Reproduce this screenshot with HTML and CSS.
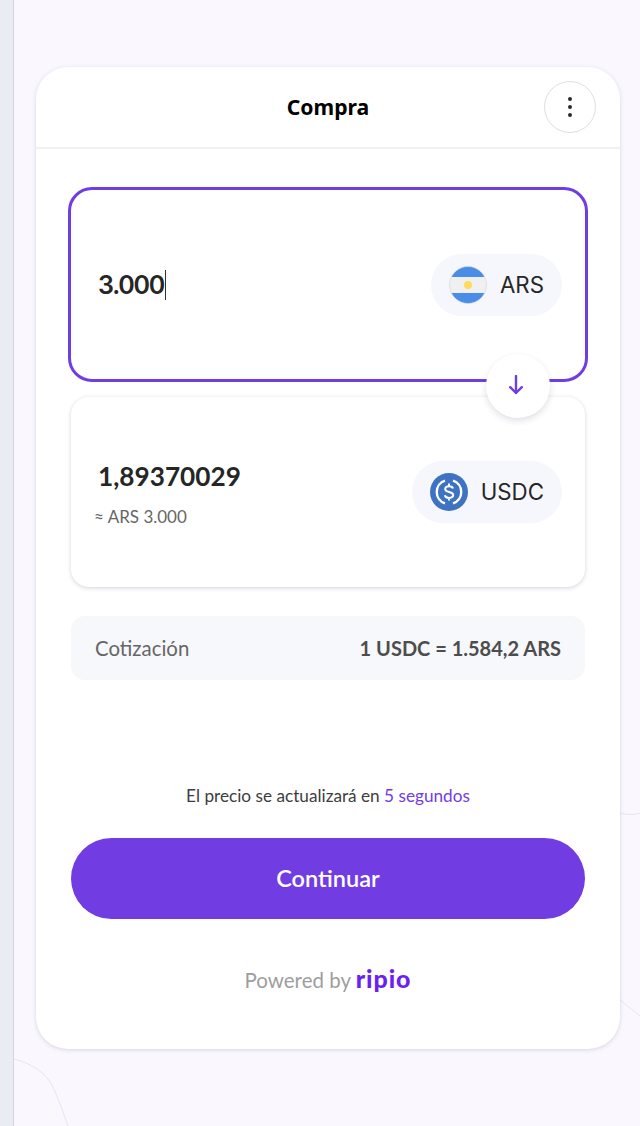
FILE: index.html
```html
<!DOCTYPE html>
<html lang="es">
<head>
<meta charset="utf-8">
<title>Compra</title>
<link rel="stylesheet" href="styles.css">
</head>
<body>
<div class="page">
  <aside class="rail"></aside>
  <main class="stage">
    <svg class="curves" width="626" height="1126" viewBox="0 0 626 1126" fill="none">
      <path d="M0 1059C16 1063 32 1072 39 1087C45 1100 50 1115 54 1126" class="curve"/>
      <path d="M606 1000L626 1016" class="curve"/>
      <path d="M606 813C613 815 619 815 626 813" class="curve"/>
    </svg>
    <section class="card">
      <header class="head">
        <h1 class="title">Compra</h1>
        <button class="more" type="button" aria-label="Más opciones">
          <svg width="4" height="20" viewBox="0 0 4 20"><circle cx="2" cy="2" r="2"/><circle cx="2" cy="10" r="2"/><circle cx="2" cy="18" r="2"/></svg>
        </button>
      </header>
      <div class="body">
        <div class="swap">
          <div class="from">
            <div class="amount-in">3.000<span class="caret"></span></div>
            <div class="pill">
              <svg class="coin" width="38" height="38" viewBox="0 0 38 38">
                <defs><clipPath id="flag"><circle cx="19" cy="19" r="18.5"/></clipPath></defs>
                <g clip-path="url(#flag)">
                  <rect width="38" height="38" fill="#f0f0f0"/>
                  <rect width="38" height="11" fill="#4a8de8"/>
                  <rect y="27" width="38" height="11" fill="#4a8de8"/>
                  <circle cx="19" cy="19" r="4" fill="#ffda5c"/>
                </g>
                <circle cx="19" cy="19" r="18.5" fill="none" stroke="#d5d8de" stroke-width=".7"/>
              </svg>
              <span class="code">ARS</span>
            </div>
          </div>
          <div class="arrow">
            <svg width="14" height="20" viewBox="0 0 14 20" fill="none"><path d="M7 1V18M1.2 12.2L7 18L12.8 12.2" stroke="#713de3" stroke-width="2.4" stroke-linecap="round" stroke-linejoin="round"/></svg>
          </div>
          <div class="to">
            <div class="values">
              <div class="amount-out">1,89370029</div>
              <div class="approx">≈ ARS 3.000</div>
            </div>
            <div class="pill">
              <svg class="coin" width="38" height="38" viewBox="0 0 38 38" fill="none">
                <circle cx="19" cy="19" r="19" fill="#3e73c4"/>
                <path d="M15 7.6A12 12 0 0 0 15 30.4M23 7.6A12 12 0 0 1 23 30.4" stroke="#fff" stroke-width="2.4"/>
                <path d="M23 15.6C22.6 13.9 21.2 13.2 19 13.2C16.6 13.2 15.2 14.3 15.2 16C15.2 20.3 23.2 17.8 23.2 22.1C23.2 23.8 21.5 24.9 19 24.9C16.6 24.9 15.2 24 14.8 22.3M19 10.5V13.2M19 24.9V27.5" stroke="#fff" stroke-width="2"/>
              </svg>
              <span class="code">USDC</span>
            </div>
          </div>
        </div>
        <div class="rate">
          <span class="rate-label">Cotización</span>
          <span class="rate-value">1 USDC = 1.584,2 ARS</span>
        </div>
        <p class="timer">El precio se actualizará en <span class="accent">5 segundos</span></p>
        <button class="cta" type="button">Continuar</button>
        <p class="powered">Powered by <span class="brand">ripio</span></p>
      </div>
    </section>
  </main>
</div>
</body>
</html>
```
FILE: styles.css
```css
* { box-sizing: border-box; }
html, body { margin: 0; height: 100%; }
body { font-family: "Lato", sans-serif; background: #faf8fe; overflow: hidden; }
.page { display: flex; height: 1126px; }
.rail { width: 14px; flex: none; background: #e9ecf3; border-right: 1px solid #d4d5da; }
.stage { position: relative; flex: 1; padding: 67px 20px 0 22px; }
.curves { position: absolute; left: 0; top: 0; }
.curve { stroke: #e8e3fa; stroke-width: 1; }
.card {
  position: relative;
  height: 982px;
  background: #fff;
  border-radius: 32px;
  box-shadow: 0 1px 4px rgba(60, 50, 110, .18);
}
.head {
  position: relative;
  height: 82px;
  display: flex;
  align-items: center;
  justify-content: center;
  border-bottom: 2px solid #f1f1f4;
}
.title { margin: 0; font: 700 21.2px/30px "Noto Sans", sans-serif; color: #000; }
.more {
  position: absolute;
  right: 24px;
  top: 14px;
  width: 52px;
  height: 52px;
  padding: 0;
  display: flex;
  align-items: center;
  justify-content: center;
  background: #fff;
  border: 1.5px solid #dedee4;
  border-radius: 50%;
}
.more circle { fill: #2b2b2b; }
.body { padding: 38px 35px 0; }
.swap { position: relative; }
.from {
  height: 195px;
  margin: 0 -3px;
  padding: 0 23px 0 27px;
  display: flex;
  align-items: center;
  justify-content: space-between;
  border: 3px solid #713de3;
  border-radius: 24px;
}
.amount-in { display: flex; align-items: center; margin-top: 1px; font: 600 25px/34px "Inter", sans-serif; letter-spacing: -1.2px; color: #262626; }
.caret { width: 1px; height: 30px; margin-left: 1px; background: #333; }
.pill {
  height: 62px;
  padding: 0 18px 0 17.5px;
  display: flex;
  align-items: center;
  gap: 13px;
  background: #f6f7fc;
  border-radius: 31px;
}
.coin { flex: none; }
.code { font: 400 22.3px/28px "Inter", sans-serif; color: #262626; }
.arrow {
  position: absolute;
  left: 415px;
  top: 167px;
  z-index: 1;
  width: 64px;
  height: 64px;
  display: flex;
  align-items: center;
  justify-content: center;
  background: #fff;
  border-radius: 50%;
  box-shadow: 0 3px 6px rgba(40, 30, 80, .14);
}
.arrow svg { margin-top: -2px; margin-left: -5px; }
.to {
  height: 190px;
  margin-top: 15px;
  padding: 0 23px 0 27px;
  display: flex;
  align-items: center;
  justify-content: space-between;
  background: #fff;
  border-radius: 18px;
  box-shadow: 0 1px 4px rgba(40, 30, 80, .2);
}
.values { padding-top: 4px; }
.amount-out { font-weight: 700; font-size: 26.2px; line-height: 34px; color: #262626; }
.approx { margin: 12px 0 0 -4px; font-size: 17px; line-height: 24px; color: #666; }
.rate {
  height: 64px;
  margin-top: 29px;
  padding: 0 24px;
  display: flex;
  align-items: center;
  justify-content: space-between;
  background: #f7f8fc;
  border-radius: 14px;
  font-size: 20.4px;
  color: #666;
}
.rate-value { font-weight: 700; font-size: 20px; color: #4d4d4d; }
.timer { margin: 104px 0 0; text-align: center; font-size: 17.2px; line-height: 24px; color: #3d3d3d; }
.accent { color: #713de3; }
.cta {
  display: block;
  width: 100%;
  height: 81px;
  margin-top: 30px;
  padding: 0 0 2px;
  border: 0;
  border-radius: 41px;
  background: #713de3;
  color: #fff;
  font: 600 23.5px/30px "Lato", sans-serif;
}
.powered { margin: 47px 0 0; text-align: center; font-size: 20.5px; line-height: 28px; color: #9e9e9e; }
.brand { font-weight: 900; font-size: 25px; line-height: 24px; letter-spacing: .9px; color: #6b1ff0; }
```
